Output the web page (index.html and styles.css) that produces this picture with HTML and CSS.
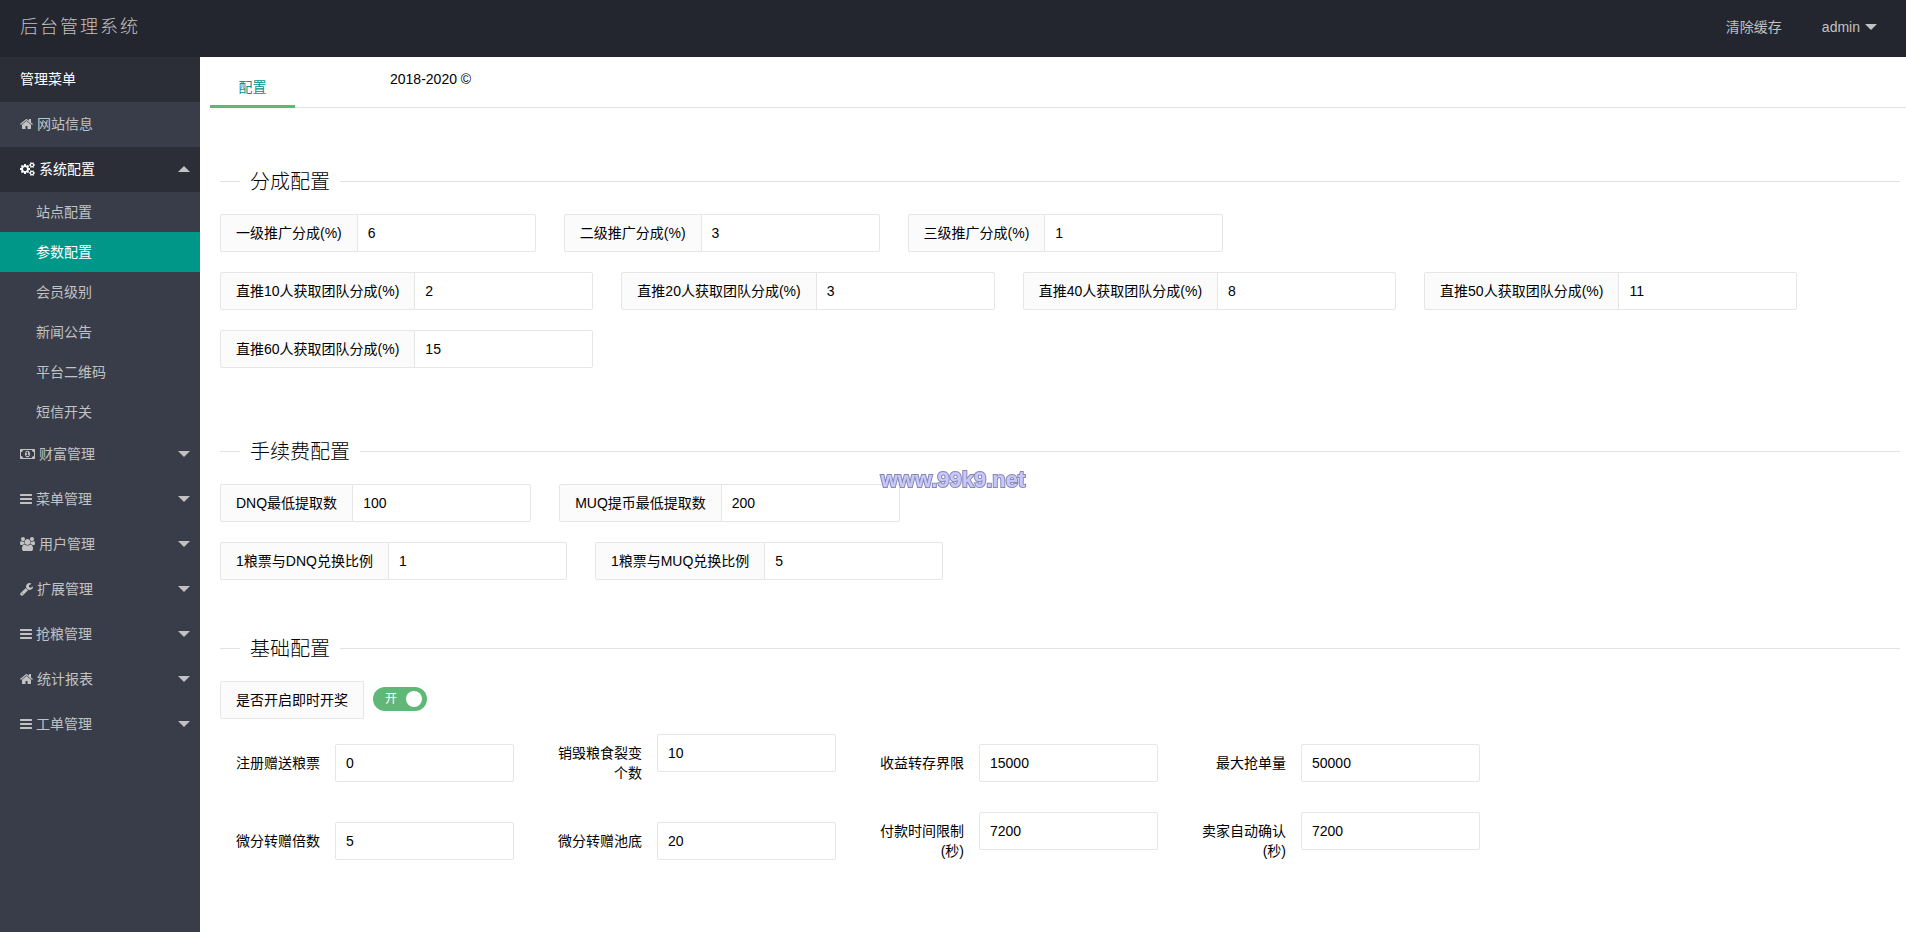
FILE: index.html
```
<!DOCTYPE html>
<html lang="zh-CN">
    <head>
        <meta charset="utf-8">
        <title>后台管理系统</title>
        <link rel="stylesheet" href="styles.css">
    </head>

    <body>
        <!-- Menu icons -->
        <svg class="sprite" aria-hidden="true">
            <symbol id="home" viewBox="64 0 1664 1792"><path d="M1472 992v480q0 26-19 45t-45 19h-384v-384h-256v384h-384q-26 0-45-19t-19-45v-480q0-1 .5-3t.5-3l575-474 575 474q1 2 1 6zm223-69l-62 74q-8 9-21 11h-3q-13 0-21-7l-692-577-692 577q-12 8-24 7-13-2-21-11l-62-74q-8-10-7-23.500t11-21.500l719-599q32-26 76-26t76 26l244 204v-195q0-14 9-23t23-9h192q14 0 23 9t9 23v408l219 182q10 8 11 21.500t-7 23.500z"/></symbol>
            <symbol id="bars" viewBox="128 0 1536 1792"><path d="M1664 1344v128q0 26-19 45t-45 19h-1408q-26 0-45-19t-19-45v-128q0-26 19-45t45-19h1408q26 0 45 19t19 45zm0-512v128q0 26-19 45t-45 19h-1408q-26 0-45-19t-19-45v-128q0-26 19-45t45-19h1408q26 0 45 19t19 45zm0-512v128q0 26-19 45t-45 19h-1408q-26 0-45-19t-19-45v-128q0-26 19-45t45-19h1408q26 0 45 19t19 45z"/></symbol>
            <symbol id="wrench" viewBox="64 0 1664 1792"><path d="M448 1472q0-26-19-45t-45-19-45 19-19 45 19 45 45 19 45-19 19-45zm644-420l-682 682q-37 37-90 37-52 0-91-37l-106-108q-38-36-38-90 0-53 38-91l681-681q39 98 114.500 173.500t173.500 114.500zm634-435q0 39-23 106-47 134-164.500 217.500t-258.500 83.500q-185 0-316.500-131.500t-131.500-316.500 131.500-316.500 316.500-131.500q58 0 121.500 16.500t107.500 46.500q16 11 16 28t-16 28l-293 169v224l193 107q5-3 79-48.500t135.500-81 70.500-35.500q15 0 23.500 10t8.500 25z"/></symbol>
            <symbol id="cogs" viewBox="0 0 1920 1792"><path d="M896 896q0-106-75-181t-181-75-181 75-75 181 75 181 181 75 181-75 75-181zm768 512q0-52-38-90t-90-38-90 38-38 90q0 53 37.500 90.500t90.500 37.500 90.500-37.500 37.500-90.500zm0-1024q0-52-38-90t-90-38-90 38-38 90q0 53 37.500 90.500t90.500 37.500 90.500-37.500 37.500-90.500zm-384 421v185q0 10-7 19.500t-16 10.500l-155 24q-11 35-32 76 34 48 90 115 7 11 7 20 0 12-7 19-23 30-82.500 89.500t-78.500 59.500q-11 0-21-7l-115-90q-37 19-77 31-11 108-23 155-7 24-30 24h-186q-11 0-20-7.500t-10-17.500l-23-153q-34-10-75-31l-118 89q-7 7-20 7-11 0-21-8-144-133-144-160 0-9 7-19 10-14 41-53t47-61q-23-44-35-82l-152-24q-10-1-17-9.500t-7-19.500v-185q0-10 7-19.500t16-10.500l155-24q11-35 32-76-34-48-90-115-7-11-7-20 0-12 7-20 22-30 82-89t79-59q11 0 21 7l115 90q34-18 77-32 11-108 23-154 7-24 30-24h186q11 0 20 7.500t10 17.500l23 153q34 10 75 31l118-89q8-7 20-7 11 0 21 8 144 133 144 160 0 8-7 19-12 16-42 54t-45 60q23 48 34 82l152 23q10 2 17 10.500t7 19.500zm640 533v140q0 16-149 31-12 27-30 52 51 113 51 138 0 4-4 7-122 71-124 71-8 0-46-47t-52-68q-20 2-30 2t-30-2q-14 21-52 68t-46 47q-2 0-124-71-4-3-4-7 0-25 51-138-18-25-30-52-149-15-149-31v-140q0-16 149-31 13-29 30-52-51-113-51-138 0-4 4-7 4-2 35-20t59-34 30-16q8 0 46 46.500t52 67.500q20-2 30-2t30 2q51-71 92-112l6-2q4 0 124 70 4 3 4 7 0 25-51 138 17 23 30 52 149 15 149 31zm0-1024v140q0 16-149 31-12 27-30 52 51 113 51 138 0 4-4 7-122 71-124 71-8 0-46-47t-52-68q-20 2-30 2t-30-2q-14 21-52 68t-46 47q-2 0-124-71-4-3-4-7 0-25 51-138-18-25-30-52-149-15-149-31v-140q0-16 149-31 13-29 30-52-51-113-51-138 0-4 4-7 4-2 35-20t59-34 30-16q8 0 46 46.500t52 67.500q20-2 30-2t30 2q51-71 92-112l6-2q4 0 124 70 4 3 4 7 0 25-51 138 17 23 30 52 149 15 149 31z"/></symbol>
            <symbol id="money" viewBox="0 0 1920 1792"><path d="M768 1152h384v-96h-128v-448h-114l-148 137 77 80q42-37 55-57h2v288h-128v96zm512-256q0 70-21 142t-59.500 134-101.500 101-138 39-138-39-101.500-101-59.500-134-21-142 21-142 59.500-134 101.500-101 138-39 138 39 101.500 101 59.500 134 21 142zm512 256v-512q-106 0-181-75t-75-181h-1152q0 106-75 181t-181 75v512q106 0 181 75t75 181h1152q0-106 75-181t181-75zm128-832v1152q0 26-19 45t-45 19h-1792q-26 0-45-19t-19-45v-1152q0-26 19-45t45-19h1792q26 0 45 19t19 45z"/></symbol>
            <symbol id="users" viewBox="0 0 1920 1792"><path d="M593 896q-162 5-265 128h-134q-82 0-138-40.500t-56-118.500q0-353 124-353 6 0 43.500 21t97.500 42.500 119 21.500q67 0 133-23-5 37-5 66 0 139 81 256zm1071 637q0 120-73 189.500t-194 69.500h-874q-121 0-194-69.500t-73-189.500q0-53 3.500-103.500t14-109 26.500-108.500 43-97.500 62-81 85.500-53.500 111.500-20q10 0 43 21.500t73 48 107 48 135 21.500 135-21.500 107-48 73-48 43-21.500q61 0 111.500 20t85.500 53.500 62 81 43 97.500 26.500 108.500 14 109 3.500 103.500zm-1024-1277q0 106-75 181t-181 75-181-75-75-181 75-181 181-75 181 75 75 181zm704 384q0 159-112.500 271.500t-271.500 112.500-271.500-112.500-112.500-271.500 112.500-271.500 271.500-112.500 271.500 112.500 112.500 271.500zm576 225q0 78-56 118.500t-138 40.500h-134q-103-123-265-128 81-117 81-256 0-29-5-66 66 23 133 23 59 0 119-21.500t97.500-42.500 43.500-21q124 0 124 353zm-128-609q0 106-75 181t-181 75-181-75-75-181 75-181 181-75 181 75 75 181z"/></symbol>
        </svg>

        <div class="header">
            <div class="logo">后台管理系统</div>
            <div class="header-nav">
                <a href="#">清除缓存</a>
                <a href="#">admin<span class="arrow"></span></a>
            </div>
        </div>

        <div class="layout">
            <nav class="side">
                <div class="side-title">管理菜单</div>
                <a class="item" href="#"><svg class="icon"><use href="#home"/></svg>网站信息</a>
                <a class="item open" href="#"><svg class="icon icon-wide"><use href="#cogs"/></svg>系统配置<span class="arrow arrow-up"></span></a>
                <div class="submenu">
                    <a href="#">站点配置</a>
                    <a class="active" href="#">参数配置</a>
                    <a href="#">会员级别</a>
                    <a href="#">新闻公告</a>
                    <a href="#">平台二维码</a>
                    <a href="#">短信开关</a>
                </div>
                <a class="item" href="#"><svg class="icon icon-wide"><use href="#money"/></svg>财富管理<span class="arrow"></span></a>
                <a class="item" href="#"><svg class="icon icon-narrow"><use href="#bars"/></svg>菜单管理<span class="arrow"></span></a>
                <a class="item" href="#"><svg class="icon icon-wide"><use href="#users"/></svg>用户管理<span class="arrow"></span></a>
                <a class="item" href="#"><svg class="icon"><use href="#wrench"/></svg>扩展管理<span class="arrow"></span></a>
                <a class="item" href="#"><svg class="icon icon-narrow"><use href="#bars"/></svg>抢粮管理<span class="arrow"></span></a>
                <a class="item" href="#"><svg class="icon"><use href="#home"/></svg>统计报表<span class="arrow"></span></a>
                <a class="item" href="#"><svg class="icon icon-narrow"><use href="#bars"/></svg>工单管理<span class="arrow"></span></a>
            </nav>

            <main class="body">
                <div class="tabs">
                    <a class="tab" href="#">配置</a>
                    <div class="copyright">2018-2020 ©</div>
                </div>

                <form class="config">
                    <fieldset class="last-gap">
                        <legend>分成配置</legend>
                        <div class="row">
                            <div class="group">
                                <label for="level1">一级推广分成(%)</label>
                                <input id="level1" type="text" value="6">
                            </div>
                            <div class="group">
                                <label for="level2">二级推广分成(%)</label>
                                <input id="level2" type="text" value="3">
                            </div>
                            <div class="group">
                                <label for="level3">三级推广分成(%)</label>
                                <input id="level3" type="text" value="1">
                            </div>
                        </div>
                        <div class="row">
                            <div class="group">
                                <label for="team10">直推10人获取团队分成(%)</label>
                                <input id="team10" type="text" value="2">
                            </div>
                            <div class="group">
                                <label for="team20">直推20人获取团队分成(%)</label>
                                <input id="team20" type="text" value="3">
                            </div>
                            <div class="group">
                                <label for="team40">直推40人获取团队分成(%)</label>
                                <input id="team40" type="text" value="8">
                            </div>
                            <div class="group">
                                <label for="team50">直推50人获取团队分成(%)</label>
                                <input id="team50" type="text" value="11">
                            </div>
                            <div class="group">
                                <label for="team60">直推60人获取团队分成(%)</label>
                                <input id="team60" type="text" value="15">
                            </div>
                        </div>
                    </fieldset>

                    <fieldset>
                        <legend>手续费配置</legend>
                        <div class="row">
                            <div class="group">
                                <label for="dnq_min">DNQ最低提取数</label>
                                <input id="dnq_min" type="text" value="100">
                            </div>
                            <div class="group">
                                <label for="muq_min">MUQ提币最低提取数</label>
                                <input id="muq_min" type="text" value="200">
                            </div>
                        </div>
                        <div class="row">
                            <div class="group">
                                <label for="dnq_rate">1粮票与DNQ兑换比例</label>
                                <input id="dnq_rate" type="text" value="1">
                            </div>
                            <div class="group">
                                <label for="muq_rate">1粮票与MUQ兑换比例</label>
                                <input id="muq_rate" type="text" value="5">
                            </div>
                        </div>
                    </fieldset>

                    <fieldset>
                        <legend>基础配置</legend>
                        <div class="group switch-row">
                            <label for="instant">是否开启即时开奖</label>
                            <div class="switch">
                                <input id="instant" type="checkbox" checked>
                                <span>开</span>
                            </div>
                        </div>
                        <div class="row plain">
                            <div class="group">
                                <label for="reg_gift">注册赠送粮票</label>
                                <input id="reg_gift" type="text" value="0">
                            </div>
                            <div class="group">
                                <label for="fission">销毁粮食裂变个数</label>
                                <input id="fission" type="text" value="10">
                            </div>
                            <div class="group">
                                <label for="income_limit">收益转存界限</label>
                                <input id="income_limit" type="text" value="15000">
                            </div>
                            <div class="group">
                                <label for="max_order">最大抢单量</label>
                                <input id="max_order" type="text" value="50000">
                            </div>
                        </div>
                        <div class="row plain">
                            <div class="group">
                                <label for="gift_times">微分转赠倍数</label>
                                <input id="gift_times" type="text" value="5">
                            </div>
                            <div class="group">
                                <label for="gift_pool">微分转赠池底</label>
                                <input id="gift_pool" type="text" value="20">
                            </div>
                            <div class="group">
                                <label for="pay_time">付款时间限制(秒)</label>
                                <input id="pay_time" type="text" value="7200">
                            </div>
                            <div class="group">
                                <label for="confirm_time">卖家自动确认(秒)</label>
                                <input id="confirm_time" type="text" value="7200">
                            </div>
                        </div>
                    </fieldset>
                </form>
            </main>
        </div>

        <div class="watermark">www.99k9.net</div>
    </body>
</html>
```
FILE: styles.css
```
* {
    box-sizing: border-box;
}

body {
    display: flex;
    flex-direction: column;
    min-height: 100vh;
    margin: 0;
    font: 14px/20px "Liberation Sans", "Noto Sans CJK SC", sans-serif;
    color: #000;
    background: #fff;
}

a {
    color: inherit;
    text-decoration: none;
}

.sprite {
    display: none;
}

/* Header */
.header {
    display: flex;
    justify-content: space-between;
    height: 57px;
    padding: 0 9px 0 20px;
    background: #23262e;
    color: #c2c2c2;
}

.logo {
    font-size: 18px;
    font-weight: 300;
    line-height: 54px;
    letter-spacing: 2px;
}

.header-nav {
    display: flex;
    line-height: 54px;
}

.header-nav a {
    display: flex;
    align-items: center;
    height: 54px;
    padding: 0 20px;
}

.arrow {
    border: 6px solid transparent;
    border-top-color: #c2c2c2;
    border-bottom-width: 0;
}

.header-nav .arrow {
    margin-left: 5px;
}

/* Side menu */
.layout {
    display: flex;
    flex: 1;
}

.side {
    flex: none;
    width: 200px;
    background: #393d49;
    color: #c2c2c2;
}

.side-title, .item {
    display: flex;
    align-items: center;
    height: 45px;
    padding: 0 10px 1px 20px;
}

.side-title, .open {
    background: #2b2e37;
    color: #fff;
}

.item .arrow {
    margin-left: auto;
}

.arrow-up {
    border-width: 0 6px 6px;
    border-bottom-color: #c2c2c2;
}

.icon {
    width: 13px;
    height: 14px;
    margin-right: 4px;
    fill: currentColor;
}

.icon-wide {
    width: 15px;
}

.icon-narrow {
    width: 12px;
}

.submenu a {
    display: block;
    padding-left: 36px;
    line-height: 40px;
}

.submenu .active {
    background: #009688;
    color: #fff;
}

/* Content */
.body {
    flex: 1;
    min-width: 0;
}

.tabs {
    display: flex;
    height: 51px;
    margin-left: 10px;
    border-bottom: 1px solid #e2e2e2;
}

.tab {
    height: 41px;
    min-width: 85px;
    margin-top: 10px;
    border-bottom: 3px solid #5fb878;
    line-height: 40px;
    text-align: center;
    color: #009688;
}

.copyright {
    margin-left: 95px;
    line-height: 44px;
}

.config {
    padding: 59px 6px 0 20px;
}

fieldset {
    min-width: 0;
    margin: 0 0 54px;
    padding: 18px 0 0;
    border: 0;
    border-top: 1px solid #e2e2e2;
}

.last-gap {
    padding-bottom: 15px;
}

legend {
    margin-left: 20px;
    padding: 2px 10px 0;
    font-size: 20px;
    font-weight: 300;
    line-height: 27px;
}

.row {
    display: flex;
    flex-wrap: wrap;
    align-items: center;
    gap: 20px 28px;
}

.row + .row {
    margin-top: 20px;
}

.group {
    display: flex;
    align-items: flex-start;
}

.group label {
    padding: 8px 15px;
    border: 1px solid #e6e6e6;
    border-radius: 2px 0 0 2px;
    background: #fbfbfb;
}

.group input[type=text] {
    width: 179px;
    height: 38px;
    margin-left: -1px;
    padding: 0 10px;
    border: 1px solid #e6e6e6;
    border-radius: 0 2px 2px 0;
    background: #fff;
    font: inherit;
    color: inherit;
}

.plain label {
    width: 116px;
    border-color: transparent;
    background: none;
    text-align: right;
}

.plain input[type=text] {
    border-radius: 2px;
}

.switch-row {
    align-items: center;
    margin-bottom: 15px;
}

/* On/off switch */
.switch {
    position: relative;
    margin-left: 9px;
    height: 26px;
}

.switch input {
    display: block;
    appearance: none;
    width: 54px;
    height: 24px;
    margin: 0;
    padding: 4px 5px;
    border-radius: 12px;
    background: #5fb878;
}

.switch input::after {
    content: "";
    display: block;
    width: 16px;
    height: 16px;
    margin-left: auto;
    border-radius: 50%;
    background: #fff;
}

.switch span {
    position: absolute;
    top: 2px;
    left: 12px;
    font-size: 12px;
    color: #fff;
    pointer-events: none;
}

.watermark {
    position: fixed;
    top: 50%;
    left: 0;
    right: 0;
    font-size: 22px;
    font-weight: bold;
    line-height: 28px;
    text-align: center;
    color: #c8c8ff;
    -webkit-text-stroke: 2px #8888b0;
    paint-order: stroke fill;
    pointer-events: none;
}
```
